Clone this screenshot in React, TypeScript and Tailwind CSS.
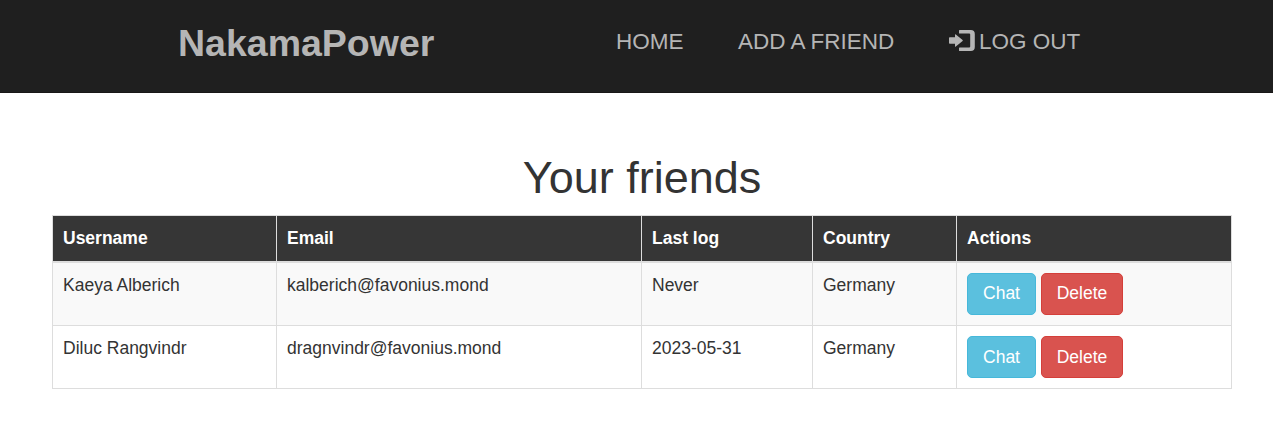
const friends = [
  { name: "Kaeya Alberich", email: "kalberich@favonius.mond", last: "Never", country: "Germany" },
  { name: "Diluc Rangvindr", email: "dragnvindr@favonius.mond", last: "2023-05-31", country: "Germany" },
];

const headings = ["Username", "Email", "Last log", "Country", "Actions"];

function LogInIcon() {
  return (
    <svg width="26" height="22" viewBox="0 0 26 22" fill="currentColor" className="mt-[30px] mr-[4px] shrink-0" aria-hidden="true">
      <path d="M0.8 7.2H6V4.8q0-1 .8-.4L13.6 10q.5.5 0 1L6.8 16.6q-.8.6-.8-.4V13.8H.8q-.8 0-.8-.8V8q0-.8.8-.8z" />
      <path d="M10.6 0h11.2a4 4 0 0 1 4 4v13a4 4 0 0 1-4 4H10.6q-.6 0-.6-.6V18q0-.6.6-.6H20.200a1 1 0 0 0 1-1V4.600a1 1 0 0 0-1-1H10.600q-.6 0-.6-.6V.6q0-.6.6-.6z" />
    </svg>
  );
}

function Header() {
  return (
    <nav className="flex h-[93px] items-start border-b border-[#191717] bg-[#1f1f1f] pl-[178px] text-[#b5b5b5]">
      <a href="#" className="mt-[22px] w-[438px] text-[37.5px] leading-[42px] font-bold">NakamaPower</a>
      <div className="flex items-start text-[22.5px] leading-[32px]">
        <a href="#" className="mt-[26px] w-[122px] whitespace-nowrap">HOME</a>
        <a href="#" className="mt-[26px] w-[211px] whitespace-nowrap">ADD A FRIEND</a>
        <a href="#" className="flex whitespace-nowrap">
          <LogInIcon />
          <span className="mt-[26px]">LOG OUT</span>
        </a>
      </div>
    </nav>
  );
}

export default function App() {
  return (
    <div className="min-h-screen bg-white font-['Liberation_Sans',Arial,sans-serif] text-[17.5px] leading-[25px] text-[#333]">
      <Header />
      <main className="ml-[52px] w-[1180px] pt-[60px]">
        <h1 className="text-center text-[45px] leading-[50px]">Your friends</h1>
        <table className="mt-[12px] w-[1180px] table-fixed border-collapse border border-[#ddd]">
          <colgroup>
            <col className="w-[224px]" />
            <col className="w-[365px]" />
            <col className="w-[171px]" />
            <col className="w-[144px]" />
            <col className="w-[275px]" />
          </colgroup>
          <thead>
            <tr className="h-[46px] bg-[#363636] text-left text-white">
              {headings.map((h) => (
                <th key={h} className="border border-b-2 border-[#ddd] px-[10px] py-0 font-bold">{h}</th>
              ))}
            </tr>
          </thead>
          <tbody>
            {friends.map((f) => (
              <tr key={f.name} className="h-[63px] align-top odd:h-[64px] odd:bg-[#f9f9f9]">
                <td className="border border-[#ddd] px-[10px] pt-[10px]">{f.name}</td>
                <td className="border border-[#ddd] px-[10px] pt-[10px]">{f.email}</td>
                <td className="border border-[#ddd] px-[10px] pt-[10px]">{f.last}</td>
                <td className="border border-[#ddd] px-[10px] pt-[10px]">{f.country}</td>
                <td className="border border-[#ddd] px-[10px] pt-[10px]">
                  <div className="flex gap-[5px] text-white">
                    <button className="h-[42px] w-[69px] rounded-[5px] border border-[#46b8da] bg-[#5bc0de]">Chat</button>
                    <button className="h-[42px] w-[82px] rounded-[5px] border border-[#d43f3a] bg-[#d9534f]">Delete</button>
                  </div>
                </td>
              </tr>
            ))}
          </tbody>
        </table>
      </main>
    </div>
  );
}
